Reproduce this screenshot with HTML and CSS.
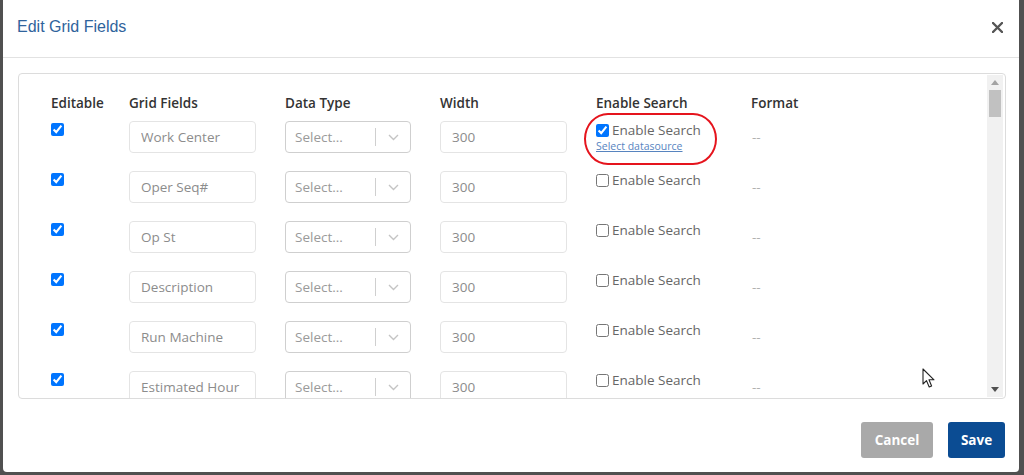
FILE: index.html
```html
<!DOCTYPE html>
<html lang="en">
<head>
    <meta charset="UTF-8">
    <meta name="viewport" content="width=device-width, initial-scale=1.0">
    <title>Edit Grid Fields</title>
    <link rel="stylesheet" href="styles.css">
</head>
<body>
    <div class="modal">
        <div class="modal-header">
            <h4 class="modal-title">Edit Grid Fields</h4>
            <button class="close-button" aria-label="Close">
                <svg width="11" height="11" viewBox="0 0 11 11">
                    <path d="M1 1 L10 10 M10 1 L1 10" stroke="#555" stroke-width="2.4" stroke-linecap="round"/>
                </svg>
            </button>
        </div>

        <div class="modal-body">
            <div class="field-panel">
                <div class="field-list">
                    <div class="grid-head">
                        <div>Editable</div>
                        <div>Grid Fields</div>
                        <div>Data Type</div>
                        <div>Width</div>
                        <div>Enable Search</div>
                        <div>Format</div>
                    </div>
                    <div id="fieldRows"></div>
                </div>

                <!-- scrollbar for the field list -->
                <div class="scroll-track">
                    <svg width="8" height="5" viewBox="0 0 8 5"><path d="M0 5 L4 0 L8 5 Z" fill="#a3a3a3"/></svg>
                    <div class="scroll-rail">
                        <div class="scroll-thumb"></div>
                    </div>
                    <svg width="8" height="5" viewBox="0 0 8 5"><path d="M0 0 L8 0 L4 5 Z" fill="#505050"/></svg>
                </div>
            </div>
        </div>

        <div class="modal-footer">
            <button class="btn btn-cancel">Cancel</button>
            <button class="btn btn-save">Save</button>
        </div>
    </div>

    <!-- mouse pointer -->
    <svg class="pointer" width="14" height="21" viewBox="0 0 14 21">
        <path d="M1 1 L1 16 L4.5 12.6 L7.2 19 L9.6 18 L7 11.8 L12 11.8 Z" fill="#fff" stroke="#222" stroke-width="1.1" stroke-linejoin="round"/>
    </svg>

    <script src="script.js"></script>
</body>
</html>
```

FILE: styles.css
```css
html, body {
    margin: 0;
    height: 100%;
    overflow: hidden;
}

body {
    background: #505050;
    font-family: "Open Sans", "DejaVu Sans", sans-serif;
    font-size: 13.5px;
    color: #333;
}

.modal {
    width: 1016px;
    height: 472px;
    margin-left: 3px;
    background: #fff;
    border-radius: 0 0 4px 4px;
    display: flex;
    flex-direction: column;
}

.modal-header {
    height: 58px;
    box-sizing: border-box;
    padding: 0 16px 3px 14px;
    border-bottom: 1px solid #e2e2e2;
    display: flex;
    align-items: center;
    justify-content: space-between;
}

.modal-title {
    margin: 0;
    font-family: "Liberation Sans", Arial, sans-serif;
    font-size: 16px;
    font-weight: normal;
    color: #2f639c;
}

.close-button {
    border: none;
    background: none;
    padding: 0;
    display: flex;
    cursor: pointer;
}

.modal-body {
    padding: 15px 13px 0 15px;
}

.field-panel {
    height: 326px;
    box-sizing: border-box;
    border: 1px solid #dcdcdc;
    border-radius: 4px;
    display: flex;
    overflow: hidden;
}

.field-list {
    flex: 1;
    overflow: hidden;
}

.scroll-track {
    width: 16px;
    margin: 1px 2px 1px 0;
    background: #f1f1f1;
    display: flex;
    flex-direction: column;
    align-items: center;
    padding: 5px 0;
    box-sizing: border-box;
    gap: 4px;
}

.scroll-rail {
    flex: 1;
    width: 100%;
}

.scroll-thumb {
    margin: 1px 2px 0;
    height: 27px;
    background: #c1c1c1;
}

.grid-head,
.grid-row {
    display: grid;
    grid-template-columns: 78px 156px 155px 156px 155px 1fr;
    padding-left: 32px;
}

.grid-head {
    padding-top: 20px;
    height: 18px;
    line-height: 18px;
    margin-bottom: 9px;
    font-weight: 600;
    color: #333;
}

.grid-row {
    height: 32px;
    margin-bottom: 18px;
    position: relative;
}

.editable-check {
    margin: 2px 0 0 0;
    width: 13px;
    height: 13px;
}

.text-input {
    width: 127px;
    height: 32px;
    box-sizing: border-box;
    border: 1px solid #e4e4e4;
    border-radius: 4px;
    padding: 0 11px;
    font-family: inherit;
    font-size: 13.5px;
    color: #8c8c8c;
    outline: none;
}

.select-box {
    width: 126px;
    height: 32px;
    box-sizing: border-box;
    border: 1px solid #cfcfcf;
    border-radius: 4px;
    display: flex;
    align-items: center;
}

.select-value {
    flex: 1;
    padding-left: 9px;
    color: #9a9a9a;
}

.select-sep {
    width: 1px;
    height: 18px;
    background: #cfcfcf;
}

.select-arrow {
    width: 34px;
    display: flex;
    justify-content: center;
}

.search-cell {
    position: relative;
    padding-top: 1px;
}

.search-label {
    display: flex;
    align-items: center;
    gap: 3px;
    color: #666;
    line-height: 16px;
}

.search-label input {
    margin: 0;
    width: 13px;
    height: 13px;
}

.datasource-link {
    display: block;
    margin-top: 1px;
    font-size: 10.5px;
    color: #5784bf;
    text-decoration: underline;
}

/* hand-drawn highlight around the active search option */
.search-cell .highlight {
    position: absolute;
    left: -12px;
    top: -8px;
    width: 133px;
    height: 52px;
    box-sizing: border-box;
    border: 2.5px solid #e5141d;
    border-radius: 24px / 26px;
    pointer-events: none;
}

.format-cell {
    line-height: 32px;
    color: #b0b0b0;
    padding-left: 1px;
}

.modal-footer {
    display: flex;
    justify-content: flex-end;
    gap: 15px;
    padding: 23px 14px 0 0;
}

.btn {
    height: 36px;
    border: none;
    border-radius: 3px;
    padding: 0;
    font-family: inherit;
    font-size: 13.5px;
    font-weight: 700;
    color: #fff;
    cursor: pointer;
}

.btn-cancel {
    width: 72px;
    background: #a9a9a9;
}

.btn-save {
    width: 57px;
    background: #0b4c93;
}

.pointer {
    position: fixed;
    left: 922px;
    top: 368px;
}
```

FILE: script.js
```js
const fields = [
    'Work Center', 'Oper Seq#', 'Op St', 'Description', 'Run Machine', 'Estimated Hour'
];

const chevron = '<svg width="11" height="7" viewBox="0 0 11 7"><path d="M1 1 L5.5 5.5 L10 1" fill="none" stroke="#c4c4c4" stroke-width="1.4"/></svg>';

const rows = document.getElementById('fieldRows');

fields.forEach((name, i) => {
    const searchOn = i === 0;
    const row = document.createElement('div');
    row.className = 'grid-row';
    row.innerHTML = `
        <div><input type="checkbox" class="editable-check" checked></div>
        <div><input type="text" class="text-input" value="${name}"></div>
        <div>
            <div class="select-box">
                <span class="select-value">Select...</span>
                <span class="select-sep"></span>
                <span class="select-arrow">${chevron}</span>
            </div>
        </div>
        <div><input type="text" class="text-input" value="300"></div>
        <div class="search-cell">
            <label class="search-label"><input type="checkbox"${searchOn ? ' checked' : ''}>Enable Search</label>
            ${searchOn ? '<a class="datasource-link" href="#">Select datasource</a><span class="highlight"></span>' : ''}
        </div>
        <div class="format-cell">--</div>`;
    rows.appendChild(row);
});
```
